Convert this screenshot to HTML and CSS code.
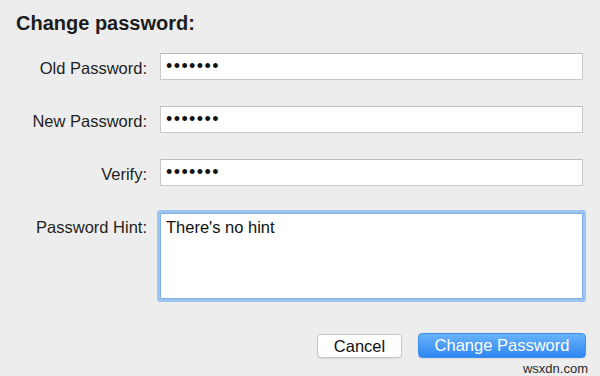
FILE: index.html
```html
<!DOCTYPE html>
<html lang="en">
<head>
    <meta charset="UTF-8">
    <meta name="viewport" content="width=device-width, initial-scale=1.0">
    <title>Change password</title>
    <link rel="stylesheet" href="styles.css">
</head>
<body>
    <div class="dialog">
        <h2 class="title">Change password:</h2>
        <form class="form" onsubmit="return false">
            <label class="label" for="oldPassword">Old Password:</label>
            <input type="password" id="oldPassword" class="field" value="1234567" readonly>

            <label class="label" for="newPassword">New Password:</label>
            <input type="password" id="newPassword" class="field" value="1234567" readonly>

            <label class="label" for="verify">Verify:</label>
            <input type="password" id="verify" class="field" value="1234567" readonly>

            <label class="label label-top" for="hint">Password Hint:</label>
            <textarea id="hint" class="field hint">There's no hint</textarea>
        </form>
        <div class="buttons">
            <button class="btn">Cancel</button>
            <button class="btn btn-primary">Change Password</button>
        </div>
        <div class="watermark">wsxdn.com</div>
    </div>
</body>
</html>
```

FILE: styles.css
```css
body {
    margin: 0;
    padding: 0;
    background-color: #ededed;
    font-family: "Liberation Sans", Arial, sans-serif;
    color: #1a1a1a;
}

.dialog {
    padding: 11px 0 0 16px;
}

.title {
    margin: 0;
    font-size: 20px;
    line-height: 24px;
    font-weight: bold;
    color: #1c1c1c;
}

.form {
    display: grid;
    grid-template-columns: 131px 423px;
    column-gap: 13px;
    row-gap: 26px;
    margin-top: 18px;
}

.label {
    font-size: 16.5px;
    line-height: 20px;
    text-align: right;
    align-self: center;
    padding-top: 2px;
    color: #1e1e1e;
}

.label-top {
    align-self: start;
    padding-top: 5px;
}

.field {
    box-sizing: border-box;
    height: 27px;
    margin: 0;
    padding: 0 5px;
    border: 1px solid #c9c9c9;
    border-top-color: #bdbdbd;
    border-radius: 0;
    background: #fff;
    font-family: "Liberation Sans", Arial, sans-serif;
    font-size: 18px;
    letter-spacing: 1.4px;
    color: #111;
    outline: none;
}

.hint {
    height: 86px;
    margin-top: 1px;
    padding: 3px 5px;
    font-size: 16.5px;
    line-height: 20px;
    letter-spacing: 0;
    resize: none;
    border-color: #7eaee6;
    box-shadow: 0 0 0 3px #9dc4ef;
    border-radius: 1px;
}

.buttons {
    display: flex;
    justify-content: flex-end;
    gap: 16px;
    margin-top: 34px;
    padding-right: 14px;
}

.btn {
    height: 25px;
    padding: 0 12px;
    border: 1px solid #c6c6c6;
    border-radius: 4px;
    background: #fff;
    box-shadow: 0 1px 1px rgba(0, 0, 0, 0.08);
    font-family: "Liberation Sans", Arial, sans-serif;
    font-size: 16.5px;
    color: #111;
}

.btn:first-child {
    width: 85px;
    margin-top: 1px;
    height: 24px;
}

.btn-primary {
    width: 168px;
    border-color: #3f8fea;
    background: linear-gradient(#69b3fb, #2f86f2);
    color: #fff;
}

.watermark {
    text-align: right;
    padding-right: 12px;
    margin-top: 3px;
    font-size: 13px;
    color: #2a2a2a;
}
```
